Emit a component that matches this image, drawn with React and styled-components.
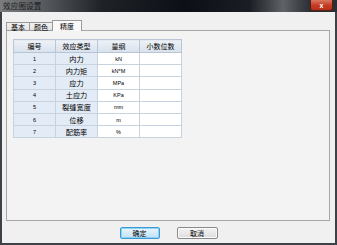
import React, { useState } from 'react';
import styled, { createGlobalStyle } from 'styled-components';

const GlobalStyle = createGlobalStyle`
    html, body {
        margin: 0;
        padding: 0;
        background: #f0f0f0;
        overflow: hidden;
    }
`;

const Window = styled.div`
    width: 337px;
    height: 245px;
    box-sizing: border-box;
    display: flex;
    flex-direction: column;
    background: #f0f0f0;
    border: 2px solid #3d4248;
    border-top: none;
    font-family: "Noto Sans CJK SC", "Liberation Sans", sans-serif;
    color: #000;
`;

const TitleBar = styled.div`
    height: 12px;
    flex: none;
    margin: 0 -2px;
    display: flex;
    align-items: center;
    justify-content: space-between;
    background: linear-gradient(90deg, #7a7c7f 0%, #5a5d61 12%, #1f2328 30%, #0c1016 55%, #1a1e24 74%, #5f6266 84%, #2b2f35 92%, #2b2f35 100%);
`;

const Title = styled.span`
    font-size: 7.5px;
    line-height: 12px;
    padding-left: 3px;
    color: #1a1a1a;
    letter-spacing: 0.2px;
`;

const CloseButton = styled.div`
    width: 23px;
    height: 11px;
    margin-right: 4px;
    align-self: flex-start;
    border-radius: 0 0 3px 3px;
    background: linear-gradient(#d9765f, #c43b22 55%, #b6301a);
    border: 1px solid #5a1d12;
    border-top: none;
    box-sizing: border-box;
    color: #fff;
    font-family: "Liberation Sans", sans-serif;
    font-size: 7px;
    font-weight: bold;
    display: flex;
    align-items: center;
    justify-content: center;
`;

const Body = styled.div`
    flex: 1;
    display: flex;
    flex-direction: column;
    padding: 8px 5px 0 4px;
`;

const TabStrip = styled.div`
    display: flex;
    align-items: flex-end;
    height: 11px;
    position: relative;
    z-index: 1;
`;

const Tab = styled.div`
    height: ${p => (p.active ? '11px' : '9px')};
    box-sizing: border-box;
    padding: 0 ${p => (p.active ? '7px' : '4px')};
    margin-left: ${p => (p.active ? '-1px' : '0')};
    margin-right: ${p => (p.active ? '-1px' : '0')};
    border: 1px solid #9a9a9a;
    border-bottom: ${p => (p.active ? 'none' : '1px solid #9a9a9a')};
    border-left: ${p => (p.first || p.active ? '1px solid #9a9a9a' : 'none')};
    background: ${p => (p.active ? '#fafafa' : 'linear-gradient(#f2f2f2, #e3e3e3)')};
    font-size: 7px;
    line-height: ${p => (p.active ? '10px' : '8px')};
    cursor: default;
`;

const Panel = styled.div`
    height: 191px;
    box-sizing: border-box;
    margin-top: -1px;
    border: 1px solid #a7a7a7;
    background: #f3f3f3;
    padding: 8px 6px;
`;

const Table = styled.table`
    border-collapse: collapse;
    border: 1px solid #8d9cb0;
    font-size: 7px;
    table-layout: fixed;
`;

const HeadCell = styled.th`
    width: 41px;
    height: 12px;
    padding: 0;
    font-weight: normal;
    text-align: center;
    border: 1px solid #b9c5d4;
    background: linear-gradient(#eef2f8, #d8e1ec);
    line-height: 10px;
`;

const Row = styled.tr`
    height: 12.2px;
`;

const Cell = styled.td`
    padding: 0;
    text-align: center;
    border: 1px solid #c8d3e0;
    background: ${p => (p.shaded ? '#e3ebf6' : '#ffffff')};
    line-height: 10px;
    font-size: ${p => (p.small ? '5.5px' : '7.2px')};
    font-family: ${p => (p.small ? '"Liberation Sans", sans-serif' : 'inherit')};
`;

const Footer = styled.div`
    display: flex;
    justify-content: center;
    gap: 17px;
    padding-top: 6px;
    padding-left: 1px;
`;

const Button = styled.button`
    width: ${p => (p.primary ? '40px' : '41px')};
    height: 12px;
    padding: 0;
    box-sizing: border-box;
    border: 1px solid ${p => (p.primary ? '#3c9ad6' : '#8a8a8a')};
    border-radius: 2px;
    background: ${p => (p.primary ? 'linear-gradient(#eaf6fd, #bfe1f6)' : 'linear-gradient(#f4f4f4, #dcdcdc)')};
    box-shadow: ${p => (p.primary ? 'inset 0 0 0 1px #8fd0f5' : 'inset 0 0 0 1px #fafafa')};
    font-family: "Noto Sans CJK SC", sans-serif;
    font-size: 7px;
    line-height: 10px;
    color: #000;
`;

const rows = [
    ['1', '内力', 'kN'],
    ['2', '内力矩', 'kN*M'],
    ['3', '应力', 'MPa'],
    ['4', '土应力', 'KPa'],
    ['5', '裂缝宽度', 'mm'],
    ['6', '位移', 'm'],
    ['7', '配筋率', '%'],
];

const tabs = ['基本', '颜色', '精度'];

export default function App() {
    const [tab, setTab] = useState(2);

    return (
        <Window>
            <GlobalStyle />
            <TitleBar>
                <Title>效应图设置</Title>
                <CloseButton>x</CloseButton>
            </TitleBar>
            <Body>
                <TabStrip>
                    {tabs.map((t, i) => (
                        <Tab key={t} first={i === 0} active={i === tab} onClick={() => setTab(i)}>
                            {t}
                        </Tab>
                    ))}
                </TabStrip>
                <Panel>
                    <Table>
                        <thead>
                            <tr>
                                <HeadCell>编号</HeadCell>
                                <HeadCell>效应类型</HeadCell>
                                <HeadCell>量纲</HeadCell>
                                <HeadCell>小数位数</HeadCell>
                            </tr>
                        </thead>
                        <tbody>
                            {rows.map(r => (
                                <Row key={r[0]}>
                                    <Cell shaded small>{r[0]}</Cell>
                                    <Cell shaded>{r[1]}</Cell>
                                    <Cell small>{r[2]}</Cell>
                                    <Cell></Cell>
                                </Row>
                            ))}
                        </tbody>
                    </Table>
                </Panel>
                <Footer>
                    <Button primary>确定</Button>
                    <Button>取消</Button>
                </Footer>
            </Body>
        </Window>
    );
}
